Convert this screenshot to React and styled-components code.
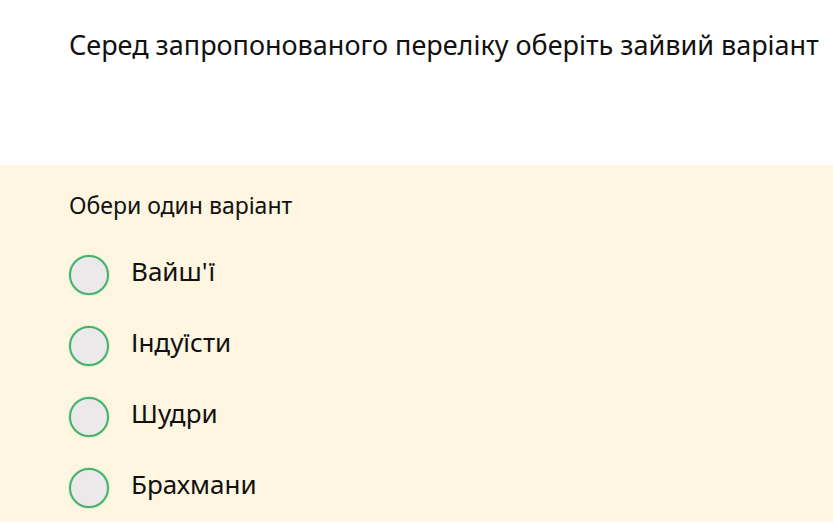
import React from 'react'
import styled, { createGlobalStyle } from 'styled-components'

const GlobalStyle = createGlobalStyle`
    html, body {
        margin: 0;
        padding: 0;
        background: #ffffff;
        font-family: "Noto Sans", "Open Sans", sans-serif;
        color: #111111;
    }
`

///Styled Components

const Page = styled.div`
    width: 833px;
    height: 522px;
    overflow: hidden;
`

const Question = styled.div`
    height: 165px;
    padding: 26px 0 0 69px;
    box-sizing: border-box;
    font-size: 27px;
    line-height: 38px;
    white-space: nowrap;
`

const Answers = styled.div`
    background: #fef6e0;
    padding: 23px 0 0 69px;
    height: 357px;
    box-sizing: border-box;
`

const Hint = styled.div`
    font-size: 23px;
    line-height: 34px;
    margin-bottom: 33px;
`

const OptionList = styled.ul`
    list-style: none;
    margin: 0;
    padding: 0;
    display: flex;
    flex-direction: column;
    gap: 31px;
`

const Option = styled.li`
    display: flex;
    align-items: center;
    gap: 22px;
    height: 40px;
`

const Radio = styled.span`
    width: 40px;
    height: 40px;
    box-sizing: border-box;
    border-radius: 50%;
    border: 2px solid #48b06f;
    box-shadow: 0 0 0 1px rgba(120, 220, 150, 0.25);
    background: #ebe9ea;
    flex-shrink: 0;
`

const OptionText = styled.span`
    font-size: 26px;
    line-height: 36px;
    margin-bottom: 8px;
`
///End of Styled Components

const options = ["Вайш'ї", 'Індуїсти', 'Шудри', 'Брахмани']

export default function App() {
    return (
        <Page>
            <GlobalStyle />
            <Question>Серед запропонованого переліку оберіть зайвий варіант</Question>
            <Answers>
                <Hint>Обери один варіант</Hint>
                <OptionList>
                    {options.map((o) => (
                        <Option key={o}>
                            <Radio />
                            <OptionText>{o}</OptionText>
                        </Option>
                    ))}
                </OptionList>
            </Answers>
        </Page>
    )
}
